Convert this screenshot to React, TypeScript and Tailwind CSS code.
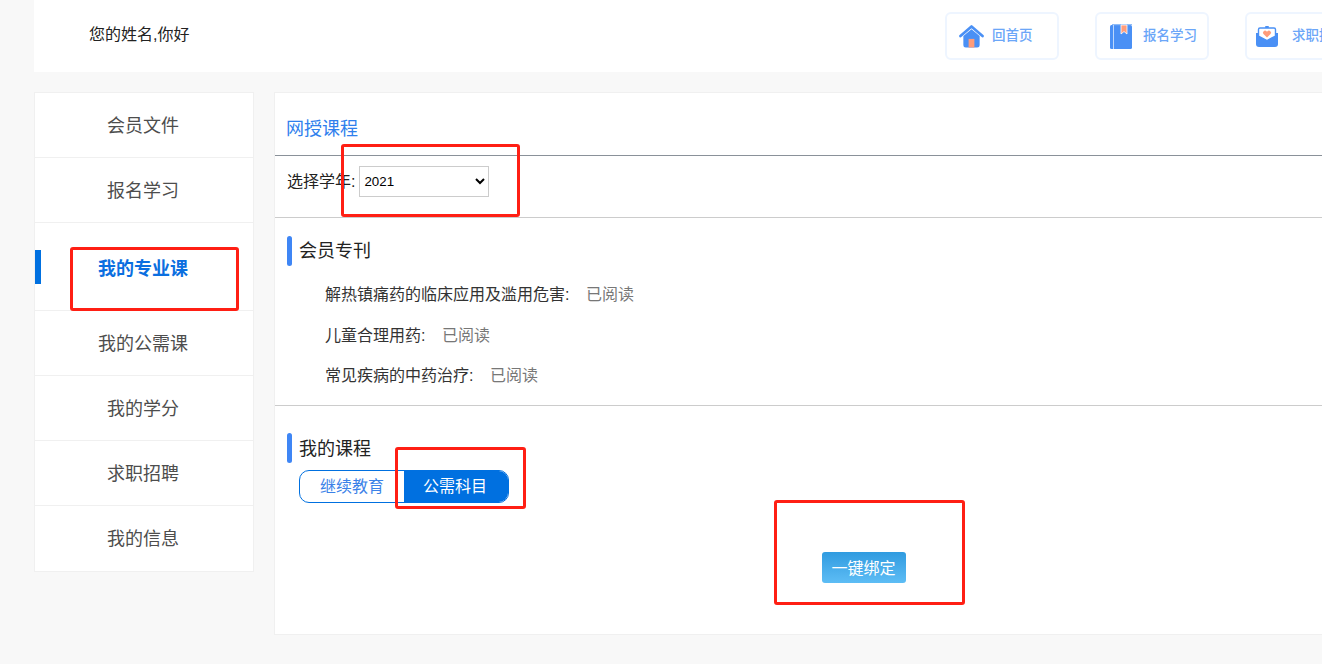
import React from 'react';

const menu = ['会员文件', '报名学习', '我的专业课', '我的公需课', '我的学分', '求职招聘', '我的信息'];

const journals = ['解热镇痛药的临床应用及滥用危害:', '儿童合理用药:', '常见疾病的中药治疗:'];

function HomeIcon() {
  return (
    <svg width="25" height="23" viewBox="0 0 26 24">
      <path d="M1.5 11.5 13 1.5l11.5 10" fill="none" stroke="#4a90f5" strokeWidth="2.8" strokeLinecap="round" strokeLinejoin="round" />
      <path d="M4.5 11.5 13 4.5l8.5 7V21a2.5 2.5 0 0 1-2.5 2.5H7A2.5 2.5 0 0 1 4.5 21z" fill="#4a90f5" />
      <rect x="10" y="14.5" width="6" height="9" fill="#ff9c7a" />
    </svg>
  );
}

function BookIcon() {
  return (
    <svg width="22" height="25" viewBox="0 0 22 25">
      <rect x="0" y="1" width="22" height="24" rx="1.5" fill="#4a90f5" />
      <rect x="2" y="0" width="20" height="1.200" fill="#8fbcf8" />
      <rect x="3" y="1" width="1" height="24" fill="#bcd7fb" />
      <path d="M11 1h6v9l-3-2.500-3 2.500z" fill="#ff9c7a" stroke="#fff" strokeWidth="0.8" />
    </svg>
  );
}

function MailIcon() {
  return (
    <svg width="22" height="21" viewBox="0 0 22 21">
      <path d="M0 7h22v11a3 3 0 0 1-3 3H3a3 3 0 0 1-3-3z" fill="#4a90f5" />
      <path d="M2.500 3.500A1.500 1.500 0 0 1 4 2h14a1.500 1.500 0 0 1 1.500 1.500V10L11 14.500 2.500 10z" fill="#fff" stroke="#4a90f5" strokeWidth="1.400" />
      <rect x="9" y="0" width="4" height="2" rx="1" fill="#4a90f5" />
      <path d="M11 11.500 7.500 8a2 2 0 0 1 3-2.700l.5.500.5-.5a2 2 0 0 1 3 2.700z" fill="#ff9c7a" />
    </svg>
  );
}

function Shortcut({ icon, label, iconClass }: { icon: React.ReactNode; label: string; iconClass: string }) {
  return (
    <a className="flex h-12 w-[114px] shrink-0 items-center rounded-md border-2 border-[#eef5ff] bg-white pl-3">
      <span className={`flex shrink-0 justify-start ${iconClass}`}>{icon}</span>
      <span className="pt-[1px] text-[13.5px] font-medium whitespace-nowrap text-[#6ba6f8]">{label}</span>
    </a>
  );
}

function SectionTitle({ children, textClass }: { children: React.ReactNode; textClass: string }) {
  return (
    <div className="flex h-[30px] items-center gap-[7px] pl-3">
      <span className="h-[30px] w-[5px] rounded-sm bg-[#3f86f5]" />
      <span className={`text-[18px] text-[#222] ${textClass}`}>{children}</span>
    </div>
  );
}

function Annotation({ className }: { className: string }) {
  return <div className={`pointer-events-none absolute rounded-[3px] border-[3px] border-[#ff1f14] ${className}`} />;
}

export default function App() {
  return (
    <div
      className="relative h-[664px] w-[1322px] overflow-hidden bg-[#f8f8f8] pl-[34px]"
      style={{ fontFamily: '"Microsoft YaHei", "Liberation Sans", "Noto Sans CJK SC", sans-serif' }}
    >
      {/* Top bar */}
      <header className="flex h-[72px] w-[1400px] items-center bg-white">
        <div className="ml-[55px] w-[856px] pb-[2px] text-[16px] text-[#222]">您的姓名,你好</div>
        <div className="flex gap-9">
          <Shortcut icon={<HomeIcon />} label="回首页" iconClass="w-[33px]" />
          <Shortcut icon={<BookIcon />} label="报名学习" iconClass="ml-[1px] w-[33px]" />
          <Shortcut icon={<MailIcon />} label="求职招聘" iconClass="-ml-[3px] w-[36px]" />
        </div>
      </header>

      <div className="mt-5 flex gap-5">
        {/* Sidebar */}
        <aside className="h-[480px] w-[220px] shrink-0 border border-[#f0f0f0] bg-white">
          {menu.map((item, i) =>
            i === 2 ? (
              <div key={item} className="relative h-[88px] border-b border-[#f0f0f0] pt-[33px] pr-[2px] text-center text-[18px] leading-[26px] font-bold text-[#0b6fe0]">
                <span className="absolute top-[27px] left-0 h-[34px] w-1.5 bg-[#0070e0]" />
                {item}
              </div>
            ) : (
              <div
                key={item}
                className="flex h-[65px] items-center justify-center border-b border-[#f0f0f0] pt-[2px] pr-[2px] text-[18px] text-[#4d4d4d] last:border-b-0"
              >
                {item}
              </div>
            ),
          )}
        </aside>

        {/* Main panel */}
        <main className="h-[543px] w-[1100px] shrink-0 border border-[#f0f0f0] bg-white">
          <div className="flex h-[63px] items-end border-b border-[#8a9199] pb-[13px] pl-[11px] text-[18px] leading-[26px] text-[#2f80ed]">
            网授课程
          </div>
          <div className="flex h-[62px] items-center border-b border-[#ccc] pb-[10px] pl-3 text-[16px] text-[#222]">
            <span>选择学年:</span>
            <select className="ml-[4px] h-[31px] w-[130px] border border-[#ccc] bg-white text-[13.33px] text-black" defaultValue="2021">
              <option>2021</option>
            </select>
          </div>

          <div className="h-[188px] border-b border-[#ccc] pt-[18px]">
            <SectionTitle textClass="pt-0">会员专刊</SectionTitle>
            <div className="mt-[16px] flex flex-col gap-[14.5px] pl-[50px]">
              {journals.map((title) => (
                <div key={title} className="flex h-[26px] items-center text-[16px]">
                  <span className="text-[#333]">{title}</span>
                  <span className="ml-[16.5px] text-[#777]">已阅读</span>
                </div>
              ))}
            </div>
          </div>

          <div className="pt-[27px]">
            <SectionTitle textClass="pt-[3px]">我的课程</SectionTitle>
            <div className="mt-[7px] ml-6 flex h-[33px] w-[210px] overflow-hidden rounded-[10px] border border-[#0070e0] text-[16px]">
              <span className="flex w-[104px] items-center justify-center pt-[1px] text-[#3b82e8]">继续教育</span>
              <span className="flex flex-1 items-center justify-center bg-[#0070e0] pt-[1px] pr-[2px] text-white">公需科目</span>
            </div>
            <div className="mt-[49px] ml-[547px] flex h-[31px] w-[84px] items-center justify-center rounded-[3px] bg-gradient-to-b from-[#2f9be0] to-[#5dbdf5] pt-[2px] pr-[1px] text-[16px] text-white">
              一键绑定
            </div>
          </div>
        </main>
      </div>

      {/* Red annotation boxes drawn over the screenshot */}
      <Annotation className="top-[144px] left-[341px] h-[73px] w-[179px]" />
      <Annotation className="top-[247px] left-[70px] h-[64px] w-[169px]" />
      <Annotation className="top-[447px] left-[395px] h-[62px] w-[131px]" />
      <Annotation className="top-[500px] left-[774px] h-[105px] w-[191px]" />
    </div>
  );
}
